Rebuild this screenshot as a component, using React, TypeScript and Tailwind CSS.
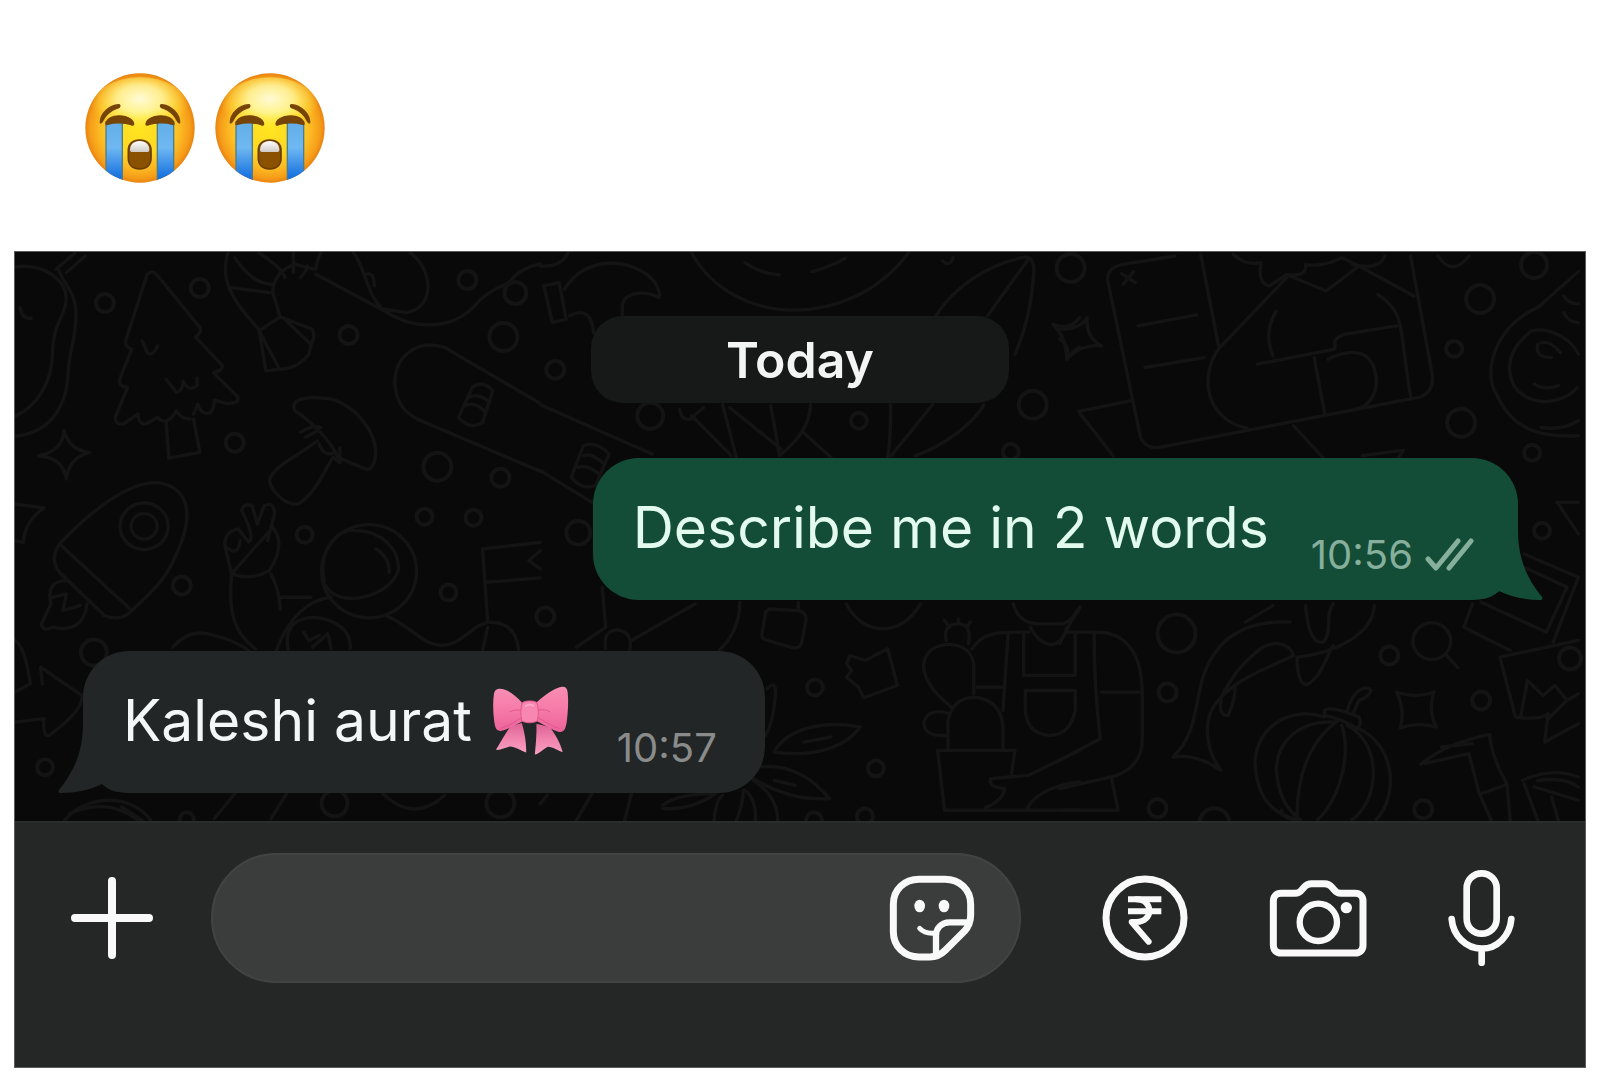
import type { ReactNode } from "react";

function CryingFace({ id }: { id: string }) {
  return (
    <svg
      viewBox="45 37 330 330"
      className="size-[110px]"
      role="img"
      aria-label="Loudly crying face"
    >
      <defs>
        <radialGradient id={`${id}-skin`} cx="50%" cy="50%" r="50%">
          <stop offset="0" stopColor="#ffe51f" />
          <stop offset="0.5" stopColor="#ffd725" />
          <stop offset="0.75" stopColor="#fcb922" />
          <stop offset="0.92" stopColor="#f59c19" />
          <stop offset="1" stopColor="#e98310" />
        </radialGradient>
        <radialGradient id={`${id}-shine`} cx="50%" cy="36%" r="52%">
          <stop offset="0" stopColor="#fffce0" stopOpacity="0.95" />
          <stop offset="0.45" stopColor="#fff9a8" stopOpacity="0.8" />
          <stop offset="0.8" stopColor="#fff050" stopOpacity="0.35" />
          <stop offset="1" stopColor="#ffe92e" stopOpacity="0" />
        </radialGradient>
        <linearGradient id={`${id}-tear`} x1="0" y1="0" x2="0" y2="1">
          <stop offset="0" stopColor="#62aee6" />
          <stop offset="0.4" stopColor="#6fb8f2" />
          <stop offset="0.85" stopColor="#1b75e0" />
          <stop offset="1" stopColor="#0f6fe0" />
        </linearGradient>
        <linearGradient id={`${id}-teeth`} x1="0" y1="0" x2="0" y2="1">
          <stop offset="0" stopColor="#ffffff" />
          <stop offset="1" stopColor="#cfcbc6" />
        </linearGradient>
        <clipPath id={`${id}-clip`}>
          <circle cx="210" cy="202" r="164" />
        </clipPath>
      </defs>
      <circle cx="210" cy="202" r="164" fill={`url(#${id}-skin)`} />
      <ellipse cx="210" cy="140" rx="145" ry="90" fill={`url(#${id}-shine)`} />
      <g clipPath={`url(#${id}-clip)`} stroke="#4f7d86" strokeWidth="4">
        <rect x="108" y="184" width="49" height="190" fill={`url(#${id}-tear)`} />
        <rect x="262" y="184" width="49" height="190" fill={`url(#${id}-tear)`} />
      </g>
      <g fill="#754406" stroke="#754406" strokeWidth="4" strokeLinejoin="round">
        <path d="M91 184C92 160 116 134 146 132C152 133 150 140 143 142C122 150 106 164 97 182C95 187 90 188 91 184Z" />
        <path d="M329 184C328 160 304 134 275 132C269 133 271 140 278 142C299 150 314 164 323 182C325 187 330 188 329 184Z" />
        <path d="M108 188C111 172 130 165 150 166C174 167 190 177 191 190C191 194 187 194 183 192C164 186 135 184 116 190C111 192 107 193 108 188Z" />
        <path d="M312 188C309 172 290 165 270 166C246 167 229 177 228 190C228 194 232 194 236 192C255 186 286 184 304 190C309 192 313 193 312 188Z" />
      </g>
      <path
        d="M209 238C231 238 243 250 243 269V293C243 313 230 325 209 325C188 325 175 313 175 293V269C175 250 187 238 209 238Z"
        fill="#8a5200"
        stroke="#6a3d03"
        strokeWidth="5"
      />
      <path
        d="M209 241C227 241 238 252 238 268C238 273 235 274 230 274H188C183 274 180 273 180 268C180 252 191 241 209 241Z"
        fill={`url(#${id}-teeth)`}
      />
    </svg>
  );
}

function Bow() {
  return (
    <svg
      viewBox="68 135 232 210"
      className="-my-1 h-[70px] w-[77px]"
      role="img"
      aria-label="Ribbon"
    >
      <defs>
        <linearGradient id="bow-loop" x1="0" y1="0" x2="0" y2="1">
          <stop offset="0" stopColor="#f88fb4" />
          <stop offset="0.5" stopColor="#f67aa8" />
          <stop offset="1" stopColor="#ec639a" />
        </linearGradient>
        <linearGradient id="bow-tail" x1="0" y1="0" x2="0" y2="1">
          <stop offset="0" stopColor="#dd6294" />
          <stop offset="0.5" stopColor="#f083ae" />
          <stop offset="1" stopColor="#f79fc0" />
        </linearGradient>
      </defs>
      <path d="M124 255C110 276 96 300 80 327C93 329 108 320 122 317C138 318 154 329 171 335C172 305 166 275 158 246Z" fill="url(#bow-tail)" />
      <path d="M202 248C203 278 200 310 197 341C209 339 222 325 235 318C250 317 266 330 281 334C274 305 258 281 243 258Z" fill="url(#bow-tail)" />
      <path d="M92 143C115 143 138 164 158 184V242C140 250 116 266 94 270C81 270 78 262 75 244C71 214 70 184 74 157C77 146 83 143 92 143Z" fill="url(#bow-loop)" />
      <path d="M279 137C254 141 226 163 202 184V240C222 250 246 266 270 273C286 275 290 262 293 244C297 212 299 180 296 154C294 140 289 137 279 137Z" fill="url(#bow-loop)" />
      <g fill="none" stroke="#e0588f" strokeWidth="3" strokeLinecap="round">
        <path d="M156 208C144 205 132 207 122 212" />
        <path d="M156 230C140 240 120 254 96 262" />
        <path d="M206 208C220 204 232 206 242 212" />
        <path d="M206 230C228 242 250 256 270 263" />
      </g>
      <path d="M160 184C172 178 192 178 203 184C209 201 209 224 204 240C192 247 170 247 158 240C153 222 154 200 160 184Z" fill="#f887b0" stroke="#e0588f" strokeWidth="3" />
      <path d="M170 195C176 190 186 190 192 194" fill="none" stroke="#fcaac8" strokeWidth="6" strokeLinecap="round" />
    </svg>
  );
}

const dots = [
  [104, 302, 9], [199, 287, 9], [348, 334, 9], [234, 442, 9], [467, 279, 9],
  [515, 292, 11], [503, 336, 14], [437, 466, 14], [500, 477, 9], [424, 516, 8],
  [473, 517, 8], [304, 534, 8], [181, 585, 9], [448, 592, 8], [545, 616, 9],
  [93, 652, 13], [44, 767, 8], [334, 803, 13], [500, 803, 14], [186, 819, 7],
  [555, 369, 9], [650, 415, 13], [859, 420, 8], [1011, 451, 8], [1033, 404, 14],
  [578, 532, 12], [1071, 267, 14], [1481, 298, 14], [1535, 264, 13],
  [1455, 348, 8], [1462, 422, 14], [1533, 452, 8], [1543, 530, 8],
  [815, 687, 8], [876, 768, 8], [1177, 633, 19], [1168, 692, 9],
  [1390, 655, 9], [1482, 700, 9], [1158, 808, 9], [1424, 809, 9],
  [1571, 658, 11], [865, 816, 8], [814, 820, 8], [1215, 823, 15],
];

function Wallpaper() {
  return (
    <svg
      viewBox="14 251 1572 570"
      preserveAspectRatio="xMidYMin slice"
      className="absolute inset-0 size-full"
      fill="none"
      stroke="#141414"
      strokeWidth="4"
      strokeLinecap="round"
      strokeLinejoin="round"
      aria-hidden="true"
    >
      {dots.map(([cx, cy, r]) => (
        <circle key={`${cx}-${cy}`} cx={cx} cy={cy} r={r} />
      ))}
      {/* jar, tree, bouquet, skateboard, mushroom */}
      <g transform="translate(0 240) scale(.3444 .3333)" strokeWidth="10">
        <path d="M41 78C110 68 165 100 185 145C205 210 150 240 150 330C150 430 100 500 41 526M165 80C180 130 218 150 218 220C218 300 195 340 195 400C190 510 130 580 41 586M160 85L215 36M190 95L245 45M55 200Q60 235 88 232" />
        <path d="M425 100Q440 85 456 105L580 262Q580 280 565 288L642 372Q648 388 618 396L688 468Q695 490 655 488L620 478Q618 520 598 518Q578 515 572 490L560 520M425 100L362 300Q360 318 380 325L345 415Q342 438 368 440L332 530Q332 552 355 550L398 520Q400 550 420 550L455 530Q480 560 510 510Q525 535 550 535M480 545L488 652L578 635L560 535M410 300L425 335Q440 350 455 315M480 415L510 455Q530 450 530 420Q545 455 570 435V412" />
        <path d="M660 36C635 110 670 180 750 265L770 390L810 385L750 270L812 228L790 155C790 110 820 80 855 70L915 85C920 60 920 50 930 36M670 140L780 155M680 50C710 100 750 130 790 130M750 36C800 70 820 90 825 110M812 228L905 265Q915 285 902 310L895 340Q860 385 810 385M825 235L898 308M850 36V95M870 110Q890 90 890 75" />
        <path d="M915 100L1115 210C1200 270 1320 270 1390 180C1440 130 1470 140 1490 110C1510 85 1540 75 1568 68M1025 36C1060 80 1060 160 1115 210M1190 36C1260 90 1260 200 1180 215L1115 205M1060 100Q1085 90 1085 135" />
        <path d="M1568 488L1290 320C1200 290 1140 360 1145 430C1150 490 1175 515 1210 535L1568 692M1370 440Q1400 415 1430 450L1400 545Q1365 570 1330 530ZM1350 495Q1375 480 1405 510M1360 470Q1390 455 1420 485" />
        <path d="M855 510C835 470 905 465 960 475C1040 500 1105 590 1085 665Q1075 690 1060 685L980 650C960 600 900 540 855 510ZM870 575Q910 550 930 560M885 590L920 570M920 600C860 650 790 675 780 720C790 760 830 795 865 790C920 750 940 690 965 650L985 665V620M925 610Q940 650 970 635" />
        <path d="M183 570Q180 630 110 645Q180 650 190 715Q198 650 258 635Q200 630 183 570Z" />
      </g>
      {/* hammer, guitar, leaves */}
      <g transform="translate(540 240) scale(.3444 .3333)" strokeWidth="10">
        <path d="M10 135L55 125L75 235L35 245ZM70 145C130 40 270 50 330 120Q350 150 345 170C310 150 250 150 238 190V228M85 225C130 200 150 225 155 275M0 75Q60 80 80 36" />
        <path d="M440 36C560 260 900 270 1070 36M595 65Q640 98 695 102M790 92Q850 75 885 52M1150 225C1200 140 1300 70 1410 48Q1435 50 1435 90C1430 180 1410 270 1380 340M1300 225L1415 60M1170 60Q1190 80 1200 50" />
        <path d="M405 505Q410 540 435 535L475 500M440 525L555 645M530 492L570 650M550 500L700 625M670 495L695 640M785 492C785 550 750 600 695 645M765 575L845 650M1018 492Q1020 580 1010 650M1140 492L1020 645M1290 492C1250 560 1160 620 1090 645" />
        <path d="M0 492L325 640M0 690L150 785M125 615Q165 600 200 640L160 735Q120 750 90 710ZM125 645Q150 635 185 670M110 680Q135 670 170 700" />
        <path d="M1490 250Q1540 270 1568 230M1490 250Q1530 290 1530 355Q1560 320 1568 320" />
      </g>
      {/* postcard, backpack and eye */}
      <g transform="translate(1060 240) scale(.3444 .3333)" strokeWidth="10">
        <path d="M335 45L175 72Q135 85 140 120L235 590Q250 625 290 620L1050 468Q1090 450 1083 400L1020 45M410 40L462 315M228 255L398 222M248 380L420 350M180 98L220 125M215 92L185 130" />
        <path d="M660 110L465 320C400 410 430 540 545 562M505 40Q540 75 585 65Q575 130 610 135L660 100Q720 110 715 70Q760 80 820 50L870 75L775 150L670 105M850 70Q930 90 945 45M870 75L1030 165M575 370L800 325V300Q810 285 830 280L980 255M630 210C600 260 605 310 620 345M925 160C1010 220 985 260 1020 465M740 350L770 515M780 355C850 320 910 325 920 410C925 470 890 500 860 505M1100 45Q1140 110 1190 45" />
        <path d="M205 480L55 512L155 645M680 555L765 650M880 645L1000 628L985 650" />
        <path d="M1508 92L1390 200C1260 260 1230 400 1270 460C1320 580 1420 590 1508 585M1340 300C1290 360 1300 440 1360 470C1420 500 1480 470 1505 440M1340 300L1370 270C1430 255 1490 300 1508 340M1380 430Q1410 450 1450 435M1390 310Q1380 350 1430 350M1400 305Q1430 300 1455 335M1400 560Q1460 570 1508 540M1465 165Q1480 190 1508 188M1465 215Q1480 245 1508 245" />
        <path d="M0 265Q60 265 80 230Q75 290 122 315Q60 310 22 355Q30 310 0 295" />
      </g>
      {/* rocket, astronaut, flag */}
      <g transform="translate(0 480) scale(.3444 .3333)" strokeWidth="10">
        <path d="M170 190C270 80 390 -10 470 8C550 30 560 110 510 220C480 300 430 340 380 390Q350 425 300 405L170 275Q140 235 170 190ZM170 190L380 390M190 300Q130 300 145 370L118 430Q120 455 150 440Q240 460 250 370M150 350L190 340L180 390L230 375" />
        <ellipse cx="416" cy="137" rx="70" ry="70" />
        <ellipse cx="416" cy="137" rx="38" ry="38" />
        <path d="M41 70L125 82Q70 120 65 185L41 180" />
        <path d="M670 280L650 190Q655 150 690 145L720 185Q740 170 700 90Q705 65 730 75L745 130L765 75Q795 60 795 100L775 180M790 140Q830 190 780 270Q730 300 670 280ZM655 200Q690 230 695 180M670 285C660 400 680 460 740 505M785 280Q810 330 812 385M815 350H900M500 500Q550 440 620 465Q680 480 720 510M800 510C830 430 880 360 960 350M835 510C820 430 870 400 940 415Q1020 440 1015 505M880 455L895 480L925 465M905 500L950 460L960 505" />
        <ellipse cx="1070" cy="272" rx="138" ry="140" />
        <path d="M940 300C920 210 980 140 1030 150C1110 150 1160 210 1155 270C1130 350 980 390 940 310M1090 205Q1130 230 1128 275M1120 405C1210 450 1220 490 1280 495C1340 495 1370 430 1420 425C1470 425 1500 450 1505 510M1568 185L1400 205L1415 425M1410 305L1568 292M1568 210L1535 240L1568 265M1400 510L1415 440" />
        <path d="M41 480Q70 500 85 610L41 635M120 610L115 560L235 645Q240 690 140 765Q120 770 125 715L41 725M185 1020C250 940 380 940 435 1020M200 1000Q310 950 400 1020M350 980L410 1020M620 1015L680 940M785 1015L830 940M1110 940Q1200 1030 1290 945" />
      </g>
      {/* balloon, leaves, cactus */}
      <g transform="translate(540 560) scale(.3444 .3333)" strokeWidth="10">
        <path d="M180 80L190 200L105 260M190 265Q180 210 225 208Q270 215 260 268M265 240L450 130M580 125C580 180 560 230 520 270M665 145L750 150Q775 155 772 180L760 245Q755 265 735 262L660 240Q640 235 645 215L655 155ZM750 125V150M890 130C940 230 1050 230 1105 130" />
        <path d="M900 285L945 300L1010 265L1038 375L940 412L925 380L890 350L905 330L890 310ZM660 385Q690 350 682 420Q675 490 655 525M680 575C720 500 830 480 930 500C880 570 780 590 680 575ZM765 545L845 530M640 620C720 610 790 650 840 715C760 720 690 700 620 655M680 660L740 675M505 780Q510 720 530 705M570 780Q590 730 590 690M625 780Q630 720 595 690M690 780Q690 710 620 660M355 735Q400 700 510 700Q440 750 355 745M105 780L150 700M245 780L265 700M0 730L20 705" />
        <path d="M1155 570H1380L1370 640M1155 570L1175 750H1568M1185 565V480Q1200 410 1265 410Q1340 420 1345 500V565M1195 440C1110 370 1100 310 1130 275C1160 240 1250 240 1260 310V400M1180 240Q1170 190 1215 190Q1255 190 1245 250M1175 180L1190 200M1215 175V190M1250 185L1240 200M1190 460Q1130 440 1115 485Q1115 530 1180 525M1255 265C1290 210 1340 215 1420 215M1360 220L1345 450M1270 380H1350M1405 220V345H1555V220M1410 390H1555V450Q1540 525 1480 525Q1410 520 1410 440ZM1375 130Q1390 190 1450 190H1520Q1560 170 1568 140M1425 200Q1450 250 1485 252Q1520 250 1530 200M1568 570L1420 645L1310 655Q1300 680 1350 685Q1345 720 1295 742M1568 665Q1450 680 1415 745" />
      </g>
      {/* overalls, flower, pumpkin, camera */}
      <g transform="translate(1060 480) scale(.3444 .3333)" strokeWidth="10">
        <path d="M0 490L50 390M20 455H100C200 450 240 530 240 640V780C240 850 190 880 150 890L170 990H0M100 460Q100 620 118 775L0 840M120 635H240M150 890L0 925" />
        <path d="M330 830C420 740 380 620 450 520C500 440 590 420 670 425M330 830Q400 820 468 870C420 800 420 720 450 675C500 600 590 570 680 525C670 490 630 480 590 500C540 540 510 570 470 650Q460 710 490 705Q510 660 510 620M540 425L620 375M715 375C720 430 730 490 765 485C795 460 770 400 795 370M915 375C910 460 800 520 690 530C690 580 700 615 720 612C760 590 770 540 795 495" />
        <path d="M770 710C690 680 580 720 568 840C570 940 610 1000 690 1018M800 725C690 720 630 790 630 870C635 940 660 990 700 1018M810 720C730 780 690 880 690 1010M820 735C850 830 810 960 750 1018M835 735C940 790 930 960 850 1018M870 745C970 790 990 940 920 1018M770 690Q790 675 870 710Q880 730 865 745Q820 715 770 705ZM835 695C850 630 890 610 905 630Q900 650 870 660L855 695M645 990Q650 1020 700 1020" />
        <path d="M980 635Q1040 655 1088 635Q1070 690 1095 740Q1040 725 990 742Q1005 690 980 635ZM1050 852Q1120 790 1250 762Q1255 830 1300 910L1310 1020M1060 850L1190 820L1220 940L1255 1020M1110 800L1200 790M1225 940L1295 915M1345 900Q1430 860 1508 890M1350 910L1390 1020M1380 920L1508 960M1390 900Q1470 890 1508 920M1430 950L1450 1020" />
        <ellipse cx="1082" cy="482" rx="55" ry="55" />
        <path d="M1120 520L1158 562M1200 370L1175 440L1310 510M1225 365L1415 455L1475 320L1350 260M1350 220L1508 290L1435 485M1508 480L1280 530L1325 710Q1400 720 1420 700L1410 785L1508 730M1340 710L1360 600L1405 645L1440 615L1475 660L1420 715M1475 660L1508 640M1445 65H1508M1450 70L1508 160" />
      </g>
    </svg>
  );
}

type BubbleProps = {
  mine?: boolean;
  time: string;
  children: ReactNode;
};

function Bubble({ mine, time, children }: BubbleProps) {
  return (
    <div
      className={
        mine
          ? "relative mr-[67px] flex items-end self-end rounded-[46px] bg-[#144d37] pt-[38px] pr-11 pb-[25px] pl-10 text-[#e2fbee]"
          : "relative ml-[68px] flex items-end self-start rounded-[46px] bg-[#232626] pt-[38px] pr-12 pb-[25px] pl-10 text-[#f4f7f7]"
      }
    >
      <svg
        viewBox="0 0 60 70"
        className={
          mine
            ? "absolute -right-[25px] bottom-0 h-[70px] w-[60px] text-[#144d37]"
            : "absolute bottom-0 -left-[25px] h-[70px] w-[60px] -scale-x-100 text-[#232626]"
        }
        aria-hidden="true"
      >
        <path
          d="M0 0H35C35 26 42 46 59 67C60 69 59 70 57 70C42 70 28 67 16 61C12 65 6 68 0 69Z"
          fill="currentColor"
        />
      </svg>
      <p className="relative flex items-center gap-[20px] pb-[15px] text-[57px] leading-[64px] whitespace-nowrap">
        {children}
      </p>
      <div
        className={
          mine
            ? "relative ml-[42px] flex items-center gap-3 text-[40px] leading-10 text-[#86af9c]"
            : "relative ml-12 flex items-center text-[40px] leading-10 text-[#8a8c8c]"
        }
      >
        <time>{time}</time>
        {mine && (
          <svg
            viewBox="0 0 49 34"
            className="h-[34px] w-[49px]"
            fill="none"
            stroke="currentColor"
            strokeWidth="5"
            strokeLinecap="round"
            strokeLinejoin="round"
            role="img"
            aria-label="Delivered"
          >
            <path d="M3 21L11 30L33 3M24 30L46 3" />
          </svg>
        )}
      </div>
    </div>
  );
}

function Composer() {
  return (
    <form className="flex items-center border-t-2 border-[#2b2d2c] bg-[#252726] pt-[30px] pr-[70px] pb-[84px] pl-[55px] text-[#f8f9f8]">
      <button type="button" aria-label="Attach">
        <svg viewBox="0 0 84 84" className="size-[84px]" fill="none" stroke="currentColor" strokeWidth="8" strokeLinecap="round">
          <path d="M42 5V79M5 42H79" />
        </svg>
      </button>
      <div className="mr-[81px] ml-[57px] flex h-[130px] min-w-0 flex-1 items-center rounded-[65px] border-2 border-[#424443] bg-[#3b3d3c] pr-11 pl-12">
        <input
          type="text"
          aria-label="Message"
          className="w-full min-w-0 flex-1 bg-transparent text-[57px] outline-none"
        />
        <button type="button" aria-label="Stickers" className="shrink-0">
          <svg viewBox="148 106 258 258" className="size-[86px]" fill="none" stroke="currentColor" strokeWidth="21" strokeLinecap="round" strokeLinejoin="round">
            <path d="M238 119H316C360 119 393 150 393 194V226C393 247 388 260 374 275L317 332C303 346 291 352 270 352H238C194 352 161 320 161 276V194C161 150 194 119 238 119Z" />
            <path d="M289 346V288C289 265 306 248 329 248H386" strokeWidth="19" />
            <path d="M240 266C250 277 266 282 286 280" strokeWidth="15" />
            <g fill="currentColor" stroke="none">
              <ellipse cx="240" cy="199" rx="16" ry="19" />
              <ellipse cx="313" cy="199" rx="16" ry="19" />
            </g>
          </svg>
        </button>
      </div>
      <div className="flex shrink-0 items-center gap-[81px]">
        <button type="button" aria-label="Send payment">
          <svg viewBox="789 100 258 258" className="size-[86px]" fill="none" stroke="currentColor" strokeWidth="21" strokeLinejoin="round">
            <circle cx="918" cy="229" r="117" />
            <g strokeWidth="18">
              <path d="M867 173H967M867 209H967" />
              <path d="M892 173C944 173 944 241 892 241H878L929 300" strokeLinecap="round" />
            </g>
          </svg>
        </button>
        <button type="button" aria-label="Camera">
          <svg viewBox="148 114 294 234" className="h-[78px] w-[98px]" fill="none" stroke="currentColor" strokeWidth="21" strokeLinejoin="round">
            <path d="M184 157H226C236 157 240 155 246 147L254 138C260 130 266 128 276 128H314C324 128 330 130 336 138L344 147C350 155 354 157 364 157H407C421 157 430 166 430 180V313C430 327 421 336 407 336H184C170 336 161 327 161 313V180C161 166 170 157 184 157Z" />
            <circle cx="296" cy="244" r="56" strokeWidth="19" />
            <circle cx="380" cy="200" r="17" fill="currentColor" stroke="none" />
          </svg>
        </button>
        <button type="button" aria-label="Record voice message">
          <svg viewBox="683 81 201 294" className="h-[98px] w-[67px]" fill="none" stroke="currentColor" strokeWidth="20" strokeLinecap="round">
            <rect x="739" y="94" width="90" height="181" rx="45" />
            <path d="M694 231C698 280 736 320 784 320C832 320 869 280 873 231M784 322V362" />
          </svg>
        </button>
      </div>
    </form>
  );
}

export default function App() {
  return (
    <main className="bg-white px-3.5 pb-3 font-['Inter',sans-serif]">
      <header className="flex gap-5 px-[71px] pt-[73px] pb-[68px]">
        <CryingFace id="first" />
        <CryingFace id="second" />
      </header>
      <section className="border border-[#5a5b5b] bg-[#252726]">
        <div className="relative flex flex-col overflow-hidden bg-[#090909] pt-16 pb-7">
          <Wallpaper />
          <div className="relative min-w-[418px] self-center rounded-[32px] bg-[#161918] px-8 pt-[14px] pb-[13px] text-center text-[50px] leading-[60px] font-semibold text-[#f4f4f4]">
            Today
          </div>
          <div className="mt-[55px] flex flex-col gap-[51px]">
            <Bubble mine time="10:56">
              Describe me in 2 words
            </Bubble>
            <Bubble time="10:57">
              Kaleshi aurat
              <Bow />
            </Bubble>
          </div>
        </div>
        <Composer />
      </section>
    </main>
  );
}
